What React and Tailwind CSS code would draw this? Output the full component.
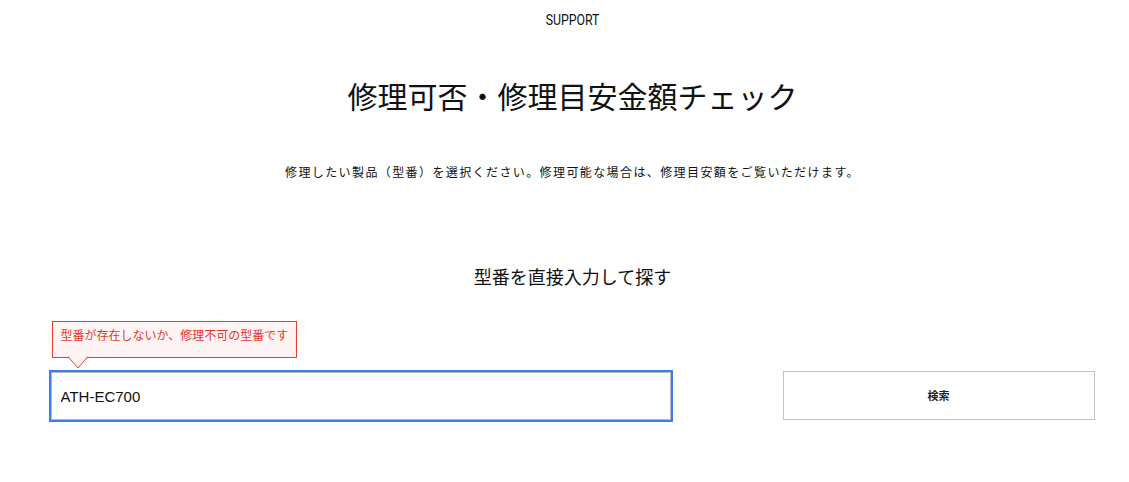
import React from 'react';

const jp = "font-['Noto_Sans_CJK_JP','Noto_Sans',sans-serif]";

const ErrorTip = ({ children }) => (
  <div className="relative inline-block self-start ml-[1px] mb-[14px] border border-[#e5402b] bg-[#fff4f4] px-[8px] h-[37px] flex items-center">
    <span className={`${jp} text-[12px] leading-[16px] text-[#e5372b]`}>{children}</span>
    <svg className="absolute left-[15px] top-full -mt-[1px]" width="20" height="13" viewBox="0 0 20 13">
      <polygon points="0,0 10,12 20,0" fill="#fff4f4" />
      <polyline points="0,0.5 10,12 20,0.5" fill="none" stroke="#e5402b" strokeWidth="1" />
    </svg>
  </div>
);

export default function App() {
  return (
    <div className="min-h-[482px] bg-white text-[#111] pl-[16px]">
      <div className="flex flex-col items-center pt-[12px]">
        <p className="font-['Liberation_Sans_Narrow','Roboto',sans-serif] text-[14px] leading-[16px] scale-x-[0.88]">
          SUPPORT
        </p>
        <h1 className={`${jp} mt-[47px] text-[30px] leading-[40px] font-normal`}>
          修理可否・修理目安金額チェック
        </h1>
        <p className={`${jp} mt-[48px] text-[12px] leading-[18px] tracking-[1.4px]`}>
          修理したい製品（型番）を選択ください。修理可能な場合は、修理目安額をご覧いただけます。
        </p>
        <h2 className={`${jp} mt-[82px] text-[18px] leading-[26px]`}>
          型番を直接入力して探す
        </h2>

        <div className="mt-[32px] w-[1044px] flex items-end justify-between">
          <div className="w-[620px] flex flex-col">
            <ErrorTip>型番が存在しないか、修理不可の型番です</ErrorTip>
            <input
              defaultValue="ATH-EC700"
              className="h-[48px] w-full border border-[#b8b8b8] shadow-[0_0_0_2px_#3b7ee8] px-[9px] font-['Liberation_Sans',Arial,sans-serif] text-[15px] text-[#111] outline-none"
            />
          </div>
          <button className={`${jp} h-[49px] w-[312px] border border-[#c2c2c2] bg-white text-[11px] font-bold text-[#222]`}>
            検索
          </button>
        </div>
      </div>
    </div>
  );
}
